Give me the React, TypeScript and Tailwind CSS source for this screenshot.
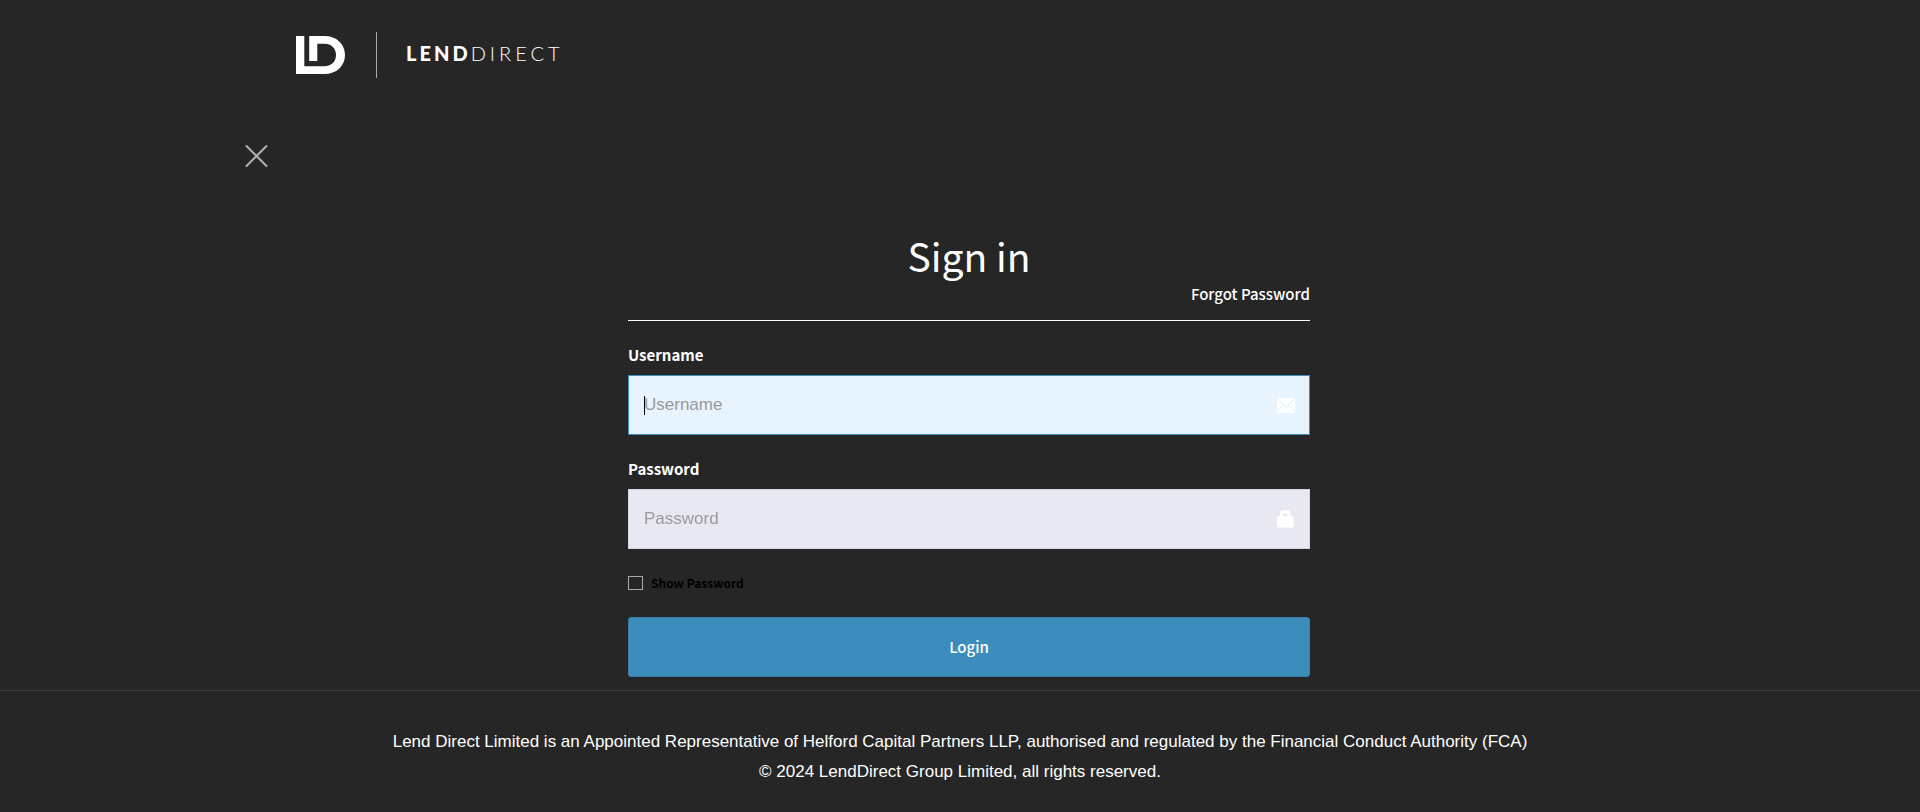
import { useState } from 'react';

const sans = "font-['Noto_Sans_CJK_JP',sans-serif]";

function Logo() {
  return (
    <a href="#home" aria-label="LendDirect home" className="flex items-center text-white">
      <svg viewBox="0 0 49 38" className="h-[38px] w-[49px]" fill="currentColor" aria-hidden="true">
        <path d="M0 0H8.3V30.2H28.5C35.5 30.2 40 25.5 40 19S35.5 7.8 28.5 7.8H21.3V25H13.2V0H28.5C40.5 0 49 8 49 19S40.5 38 28.5 38H0Z" />
      </svg>
      <span className="ml-[31px] h-[46px] w-px bg-[#a9a9a9]" />
      <span className="ml-[29px] pb-1 font-['Lato',sans-serif] text-[20px] leading-6">
        <span className="font-black tracking-[3px]">LEND</span>
        <span className="font-light tracking-[4px]">DIRECT</span>
      </span>
    </a>
  );
}

function MailIcon() {
  return (
    <svg viewBox="0 0 18 15" className="h-[15px] w-[18px]" fill="#fff" aria-hidden="true">
      <path d="M0.6 0H17.4L9 8.4Z" />
      <path d="M0 1.2L5.8 7L0 12.8Z" />
      <path d="M18 1.2V12.8L12.2 7Z" />
      <path d="M6.6 7.8L9 10.2L11.4 7.8L18 14.2V15H0V14.2Z" />
    </svg>
  );
}

function LockIcon() {
  return (
    <svg viewBox="0 0 17 18" className="h-[18px] w-[17px]" fill="#fff" aria-hidden="true">
      <path
        fillRule="evenodd"
        d="M3 6.2V3.2Q3 0.3 6 0.3H10.6Q13.6 0.3 13.6 3.2V6.2H15.6Q16.6 6.2 16.6 7.2V16.4Q16.6 17.4 15.6 17.4H1Q0 17.4 0 16.4V7.2Q0 6.2 1 6.2ZM6.2 6.2H10.4V3.4H6.2Z"
      />
    </svg>
  );
}

const field =
  "block h-[60px] w-full border pl-[15px] pr-12 font-['Liberation_Sans',Arial,sans-serif] text-[17px] text-black outline-none placeholder:text-[#999]";

export default function App() {
  const [show, setShow] = useState(false);
  const [username, setUsername] = useState('');

  return (
    <div className={`flex min-h-screen flex-col bg-[#262626] text-white ${sans}`}>
      <header className="mx-auto w-full max-w-[1430px] px-[51px] pt-8">
        <Logo />
      </header>

      <main className="mx-auto flex w-full max-w-[1430px] flex-col">
        <button type="button" aria-label="Close" className="mt-[66px] flex h-6 w-6 items-center justify-center">
          <svg viewBox="0 0 24 24" className="h-6 w-6" stroke="#b0b0b0" strokeWidth="2" strokeLinecap="round" aria-hidden="true">
            <path d="M1.5 2L21.5 22M21.5 2L1.5 22" />
          </svg>
        </button>

        <div className="w-full pl-[18px]">
          <form className="mx-auto w-full max-w-[682px]" onSubmit={(e) => e.preventDefault()}>
            <h1 className="mt-[60px] text-center text-[39px] leading-[54px]">Sign in</h1>
            <div className="flex justify-end border-b border-white pb-3.5">
              <a href="#forgot" className="text-[15px] leading-6 font-medium">Forgot Password</a>
            </div>

            <label htmlFor="username" className="mt-[22px] block text-[15px] leading-6 font-bold">Username</label>
            <div className="relative mt-2">
              <input
                id="username"
                type="text"
                autoFocus
                value={username}
                onChange={(e) => setUsername(e.target.value)}
                placeholder="Username"
                className={`${field} border-[#3c8dbc] bg-[#e8f4fd] placeholder-shown:caret-transparent`}
              />
              {username === '' && (
                <span className="pointer-events-none absolute inset-y-0 left-4 flex items-center">
                  <span className="h-[19px] w-px bg-black" />
                </span>
              )}
              <span className="absolute inset-y-0 right-3.5 flex w-[19px] items-center"><MailIcon /></span>
            </div>

            <label htmlFor="password" className="mt-[22px] block text-[15px] leading-6 font-bold">Password</label>
            <div className="relative mt-2">
              <input
                id="password"
                type={show ? 'text' : 'password'}
                placeholder="Password"
                className={`${field} border-[#d2d6de] bg-[#e8e8f2]`}
              />
              <span className="absolute inset-y-0 right-3.5 flex w-[19px] items-center"><LockIcon /></span>
            </div>

            <div className="mt-6 flex h-5 items-center gap-2">
              <input
                id="show"
                type="checkbox"
                checked={show}
                onChange={(e) => setShow(e.target.checked)}
                className="h-[14px] w-[15px] appearance-none border border-[#a9a9a9] checked:bg-[#3c8dbc]"
              />
              <label htmlFor="show" className="text-[12px] leading-5 font-bold text-black">Show Password</label>
            </div>

            <button
              type="submit"
              className="mt-6 block h-[60px] w-full rounded-[3px] border border-[#367fa9] bg-[#3c8dbc] text-[15px] leading-6 font-medium"
            >
              Login
            </button>
          </form>
        </div>
      </main>

      <footer className="mt-[13px] border-t border-[#3c3c3c] px-4 py-9 text-center font-['Liberation_Sans',Arial,sans-serif] text-[17px] leading-[30px]">
        <p>
          Lend Direct Limited is an Appointed Representative of Helford Capital Partners LLP, authorised and regulated by the Financial Conduct Authority (FCA)
        </p>
        <p>© 2024 LendDirect Group Limited, all rights reserved.</p>
      </footer>
    </div>
  );
}
